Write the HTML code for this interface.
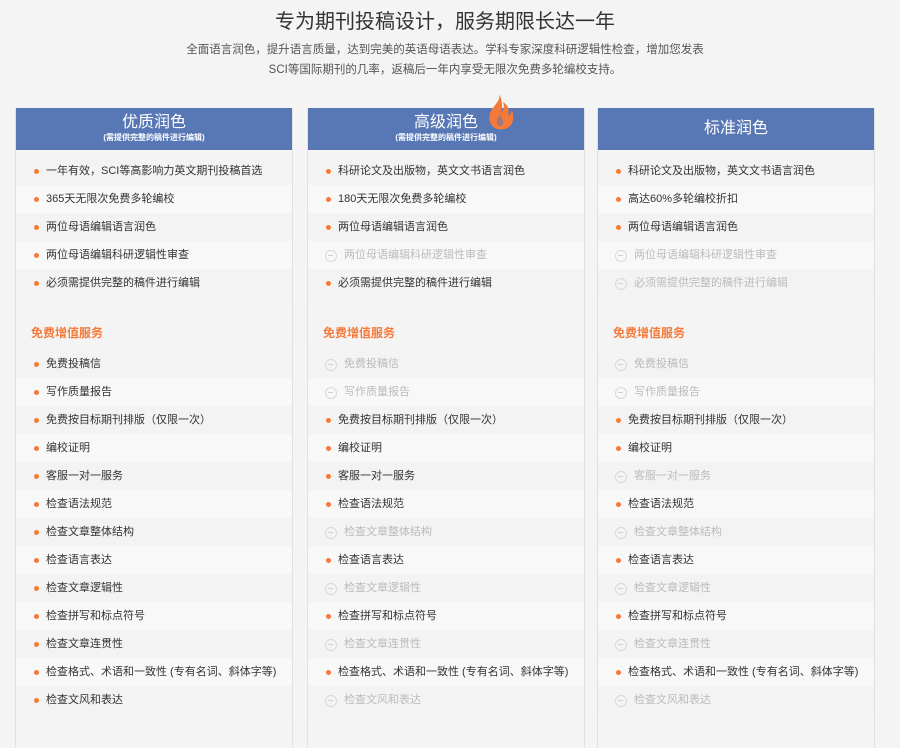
<!DOCTYPE html>
<html><head><meta charset="utf-8"><style>
*{margin:0;padding:0;box-sizing:border-box}
body{width:900px;height:733px;background:#f4f4f4;font-family:"Liberation Sans","Noto Sans CJK SC",sans-serif;overflow:hidden;position:relative;color:#333}
h1{position:absolute;top:5px;left:0;width:890px;text-align:center;font-size:20px;font-weight:normal;color:#333}
.sub{position:absolute;top:40px;left:0;width:890px;text-align:center;font-size:11.5px;line-height:20px;color:#555}
.col{position:absolute;top:108px;width:278px;height:640px;border-left:1px solid #e2e2e2;border-right:1px solid #e2e2e2;background:#f4f4f4}
.hd{height:42px;background:#5877b5;color:#fff;text-align:center}
.hd b{display:block;font-size:16px;font-weight:normal;padding-top:4px;line-height:21px}
.hd i{display:block;font-style:normal;font-size:8px;line-height:10px;font-weight:bold}
.hd.one b{padding-top:10px}
.rows{margin-top:7px}
.r{height:28px;line-height:28px;font-size:11px;padding-left:30px;position:relative;color:#333}
.r:nth-child(odd){background:#f3f3f3}
.r:nth-child(even){background:#f8f8f8}
.r:before{content:"";position:absolute;left:18px;top:12px;width:5px;height:5px;border-radius:50%;background:#f57a3a}
.r.off{color:#bbb;padding-left:36px}
.r.off:before{left:17px;top:9px;width:10px;height:10px;background:none;border:1px solid #d8d8d8}
.r.off:after{content:"";position:absolute;left:20px;top:14px;width:5px;height:1px;background:#d0d0d0}
.sec{height:53px;line-height:20px;padding-top:26px;padding-left:15px;color:#f57a3a;font-size:12px;font-weight:bold}
</style></head><body>
<h1>专为期刊投稿设计，服务期限长达一年</h1>
<div class="sub">全面语言润色，提升语言质量，达到完美的英语母语表达。学科专家深度科研逻辑性检查，增加您发表<br>SCI等国际期刊的几率，返稿后一年内享受无限次免费多轮编校支持。</div>

<div class="col" style="left:15px">
<div class="hd"><b>优质润色</b><i>(需提供完整的稿件进行编辑)</i></div>
<div class="rows">
<div class="r">一年有效，SCI等高影响力英文期刊投稿首选</div>
<div class="r">365天无限次免费多轮编校</div>
<div class="r">两位母语编辑语言润色</div>
<div class="r">两位母语编辑科研逻辑性审查</div>
<div class="r">必须需提供完整的稿件进行编辑</div>
</div>
<div class="sec">免费增值服务</div>
<div class="rows" style="margin-top:0">
<div class="r">免费投稿信</div>
<div class="r">写作质量报告</div>
<div class="r">免费按目标期刊排版（仅限一次）</div>
<div class="r">编校证明</div>
<div class="r">客服一对一服务</div>
<div class="r">检查语法规范</div>
<div class="r">检查文章整体结构</div>
<div class="r">检查语言表达</div>
<div class="r">检查文章逻辑性</div>
<div class="r">检查拼写和标点符号</div>
<div class="r">检查文章连贯性</div>
<div class="r">检查格式、术语和一致性 (专有名词、斜体字等)</div>
<div class="r">检查文风和表达</div>
</div>
</div>

<div class="col" style="left:307px">
<div class="hd"><b>高级润色</b><i>(需提供完整的稿件进行编辑)</i></div>
<div class="rows">
<div class="r">科研论文及出版物，英文文书语言润色</div>
<div class="r">180天无限次免费多轮编校</div>
<div class="r">两位母语编辑语言润色</div>
<div class="r off">两位母语编辑科研逻辑性审查</div>
<div class="r">必须需提供完整的稿件进行编辑</div>
</div>
<div class="sec">免费增值服务</div>
<div class="rows" style="margin-top:0">
<div class="r off">免费投稿信</div>
<div class="r off">写作质量报告</div>
<div class="r">免费按目标期刊排版（仅限一次）</div>
<div class="r">编校证明</div>
<div class="r">客服一对一服务</div>
<div class="r">检查语法规范</div>
<div class="r off">检查文章整体结构</div>
<div class="r">检查语言表达</div>
<div class="r off">检查文章逻辑性</div>
<div class="r">检查拼写和标点符号</div>
<div class="r off">检查文章连贯性</div>
<div class="r">检查格式、术语和一致性 (专有名词、斜体字等)</div>
<div class="r off">检查文风和表达</div>
</div>
</div>

<div class="col" style="left:597px">
<div class="hd one"><b>标准润色</b></div>
<div class="rows">
<div class="r">科研论文及出版物，英文文书语言润色</div>
<div class="r">高达60%多轮编校折扣</div>
<div class="r">两位母语编辑语言润色</div>
<div class="r off">两位母语编辑科研逻辑性审查</div>
<div class="r off">必须需提供完整的稿件进行编辑</div>
</div>
<div class="sec">免费增值服务</div>
<div class="rows" style="margin-top:0">
<div class="r off">免费投稿信</div>
<div class="r off">写作质量报告</div>
<div class="r">免费按目标期刊排版（仅限一次）</div>
<div class="r">编校证明</div>
<div class="r off">客服一对一服务</div>
<div class="r">检查语法规范</div>
<div class="r off">检查文章整体结构</div>
<div class="r">检查语言表达</div>
<div class="r off">检查文章逻辑性</div>
<div class="r">检查拼写和标点符号</div>
<div class="r off">检查文章连贯性</div>
<div class="r">检查格式、术语和一致性 (专有名词、斜体字等)</div>
<div class="r off">检查文风和表达</div>
</div>
</div>

<svg style="position:absolute;left:486px;top:94px" width="30" height="36" viewBox="0 0 30 36">
<path d="M13 0 C15 7 8 11 5 17 C2 23 3 31 9 34 C12 36 19 36 23 33 C28 29 28 22 26 16 C25 20 23 21 22 22 C24 16 22 11 17 8 C19 13 17 17 15 19 C17 12 16 5 13 0Z" fill="#f57a3a"/>
<path d="M11 29 C10 25 13 23 14 20 C15 24 18 26 17 30 C16 33 12 33 11 29Z" fill="#5877b5" opacity=".55"/>
</svg>
</body></html>
